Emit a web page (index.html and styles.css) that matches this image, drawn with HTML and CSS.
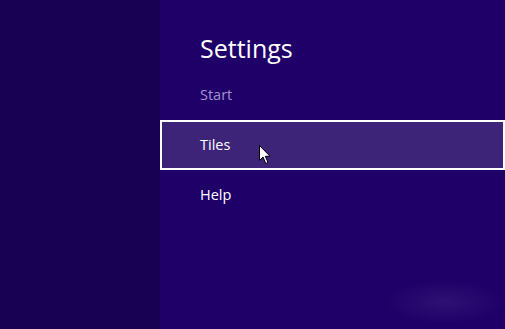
FILE: index.html
```html
<!DOCTYPE html>
<html lang="en">
<head>
    <meta charset="UTF-8">
    <meta name="viewport" content="width=device-width, initial-scale=1.0">
    <title>Settings</title>
    <link rel="stylesheet" href="styles.css">
</head>
<body>
    <div class="screen">
        <div class="side"></div>
        <div class="pane">
            <h1 class="title">Settings</h1>
            <div class="item item-dim">Start</div>
            <div class="item item-active">
                Tiles
                <svg class="cursor" width="14" height="20" viewBox="0 0 14 20">
                    <path d="M0.5 0.5 L0.5 15.5 L4 12 L6.8 18.5 L9 17.5 L6.3 11.3 L11 11.3 Z" fill="#fff" stroke="#000" stroke-width="1"/>
                </svg>
            </div>
            <div class="item">Help</div>
            <div class="glow"></div>
        </div>
    </div>
</body>
</html>
```

FILE: styles.css
```css
body {
    margin: 0;
    font-family: "Open Sans", "Noto Sans", sans-serif;
    color: #fff;
}
.screen {
    display: flex;
    width: 505px;
    height: 329px;
    overflow: hidden;
}
.side {
    width: 160px;
    background-color: #180052;
}
.pane {
    flex: 1;
    position: relative;
    background-color: #1f0068;
    padding-top: 33px;
}
.title {
    margin: 0 0 7px 40px;
    font-size: 25px;
    font-weight: 400;
    line-height: 30px;
}
.item {
    position: relative;
    height: 46px;
    padding-left: 40px;
    border: 2px solid transparent;
    margin-left: -2px;
    font-size: 14.5px;
    line-height: 46px;
}
.item-dim {
    color: #a492d0;
}
.item-active {
    background-color: #3e2479;
    border-color: #fff;
    margin-left: 0;
    padding-left: 38px;
}
.cursor {
    position: absolute;
    left: 97px;
    top: 23px;
}
.glow {
    position: absolute;
    left: 225px;
    top: 280px;
    width: 120px;
    height: 44px;
    background: radial-gradient(ellipse at center, rgba(80, 55, 140, 0.3), rgba(31, 0, 104, 0) 70%);
}
```
